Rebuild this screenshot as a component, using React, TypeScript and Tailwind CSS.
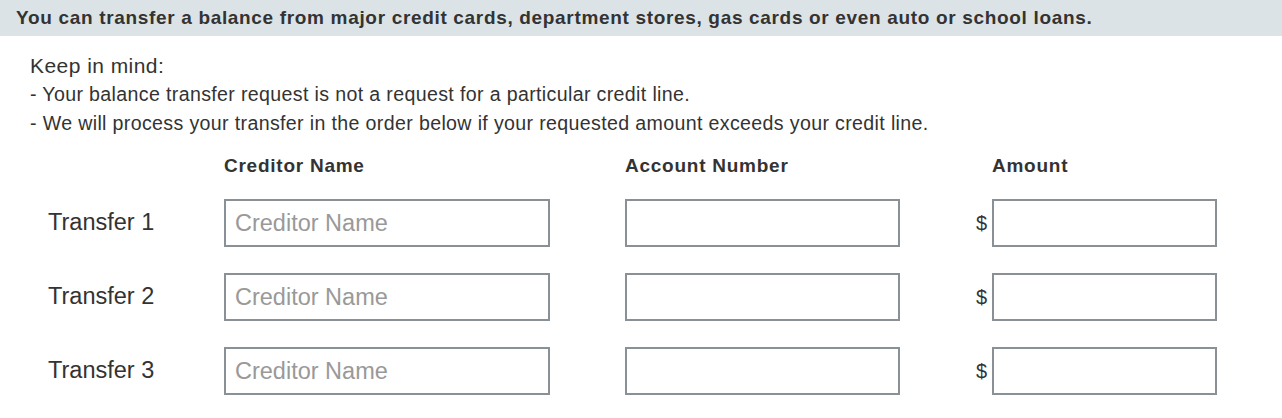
const rows = [1, 2, 3];

export default function App() {
  return (
    <div className="w-[1282px] h-[418px] bg-white text-[#333] font-['Liberation_Sans',Arial,sans-serif]">
      <div className="h-9 bg-[#dce3e6] pl-4 flex items-center">
        <p className="text-[19px] font-bold tracking-[0.67px]">
          You can transfer a balance from major credit cards, department stores, gas cards or even auto or school loans.
        </p>
      </div>

      <div className="pl-[30px] pt-[15px]">
        <p className="text-[21px] leading-[29px] tracking-[0.45px]">Keep in mind:</p>
        <p className="text-[19.6px] leading-[29px] tracking-[0.35px]">- Your balance transfer request is not a request for a particular credit line.</p>
        <p className="text-[19.6px] leading-[29px] tracking-[0.35px]">- We will process your transfer in the order below if your requested amount exceeds your credit line.</p>
      </div>

      <div className="pl-12 mt-[17px]">
        <div className="flex text-[19px] font-bold tracking-[0.75px] h-[22px] items-center">
          <div className="w-[176px]" />
          <div className="w-[401px]">Creditor Name</div>
          <div className="w-[367px]">Account Number</div>
          <div>Amount</div>
        </div>

        <div className="mt-[22px] flex flex-col gap-[26px]">
          {rows.map((n) => (
            <div key={n} className="flex items-center h-12">
              <div className="w-[176px] text-[23.5px]">Transfer {n}</div>
              <input
                type="text"
                placeholder="Creditor Name"
                className="w-[326px] h-12 border-2 border-[#899196] px-[9px] text-[23.5px] text-[#333] placeholder:text-[#999] outline-none"
              />
              <div className="w-[75px]" />
              <input
                type="text"
                className="w-[275px] h-12 border-2 border-[#899196] px-[9px] text-[23.5px] outline-none"
              />
              <div className="w-[92px] flex justify-end pr-[5px] text-[20px]">$</div>
              <input
                type="text"
                className="w-[225px] h-12 border-2 border-[#899196] px-[9px] text-[23.5px] outline-none"
              />
            </div>
          ))}
        </div>
      </div>
    </div>
  );
}
